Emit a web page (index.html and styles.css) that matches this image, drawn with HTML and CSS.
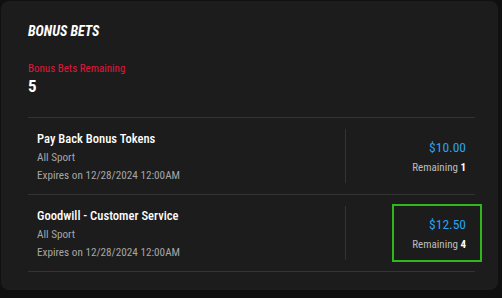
FILE: index.html
```html
<!DOCTYPE html>
<html lang="en">
<head>
    <meta charset="UTF-8">
    <title>Bonus Bets</title>
    <link rel="stylesheet" href="styles.css">
</head>
<body>

<div class="bonus-card">
    <h2 class="bonus-title">BONUS BETS</h2>
    <div class="remaining-label">Bonus Bets Remaining</div>
    <div class="remaining-count">5</div>

    <div class="bonus-list">
        <div class="bonus-row">
            <div class="bonus-info">
                <div class="bonus-name">Pay Back Bonus Tokens</div>
                <div class="bonus-sport">All Sport</div>
                <div class="bonus-expiry">Expires on 12/28/2024 12:00AM</div>
            </div>
            <div class="bonus-sep"></div>
            <div class="bonus-value">
                <div class="bonus-amount">$10.00</div>
                <div class="bonus-left">Remaining <span>1</span></div>
            </div>
        </div>
        <div class="bonus-row">
            <div class="bonus-info">
                <div class="bonus-name">Goodwill - Customer Service</div>
                <div class="bonus-sport">All Sport</div>
                <div class="bonus-expiry">Expires on 12/28/2024 12:00AM</div>
            </div>
            <div class="bonus-sep"></div>
            <div class="bonus-value selected">
                <div class="bonus-amount">$12.50</div>
                <div class="bonus-left">Remaining <span>4</span></div>
            </div>
        </div>
    </div>
</div>

</body>
</html>
```

FILE: styles.css
```css
body {
    font-family: "Roboto Condensed", "Liberation Sans Narrow", Roboto, sans-serif;
    background-color: #101010;
    margin: 0;
    padding: 1px 4px 0 1px;
    color: #fff;
}
.bonus-card {
    background: #1c1c1c;
    border-radius: 8px;
    padding: 22px 23px 19px 27px;
    height: 248px;
}
.bonus-title {
    margin: 0;
    font-size: 14px;
    font-weight: bold;
    font-style: italic;
}
.remaining-label {
    margin-top: 23px;
    color: #e0173a;
    font-size: 11px;
}
.remaining-count {
    font-size: 17px;
    font-weight: bold;
    margin-top: 1px;
}
.bonus-list {
    margin-top: 21px;
    border-top: 1px solid #333;
}
.bonus-row {
    display: flex;
    align-items: center;
    height: 76px;
    border-bottom: 1px solid #333;
    padding-left: 9px;
}
.bonus-info {
    flex: 1;
}
.bonus-name {
    font-size: 12.6px;
    font-weight: 500;
}
.bonus-sport, .bonus-expiry {
    font-size: 11.2px;
    color: #a6a6a6;
    margin-top: 5px;
}
.bonus-sep {
    width: 1px;
    height: 54px;
    background: #333;
    margin-right: 46px;
}
.bonus-value {
    width: 72px;
    height: 54px;
    padding: 0 14px 0 0;
    margin-right: -7px;
    border: 2px solid transparent;
    display: flex;
    flex-direction: column;
    justify-content: center;
    align-items: flex-end;
}
.bonus-value.selected {
    border-color: #2db81c;
}
.bonus-amount {
    color: #2aa3ee;
    font-size: 13.5px;
}
.bonus-left {
    font-size: 11px;
    color: #bdbdbd;
    margin-top: 6px;
}
.bonus-left span {
    color: #fff;
    font-weight: bold;
}
```
